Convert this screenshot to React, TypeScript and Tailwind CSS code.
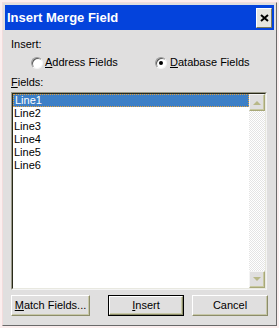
import React from 'react';

const font = "font-['Liberation_Sans',Arial,sans-serif]";

const Radio: React.FC<{ checked?: boolean }> = ({ checked }) => (
  <span className="relative inline-flex h-[12px] w-[12px] items-center justify-center rounded-full border border-t-[#9a9a9a] border-l-[#9a9a9a] border-r-[#f4f4f4] border-b-[#f4f4f4] bg-white shadow-[inset_1px_1px_0_#5a5a5a]">
    {checked && <span className="h-[4px] w-[4px] rounded-full bg-black" />}
  </span>
);

const Button: React.FC<{ children: React.ReactNode; w: string; def?: boolean }> = ({ children, w, def }) => (
  <div className={`${w} h-[21px] ${def ? 'border border-black' : ''}`}>
    <div className="flex h-full w-full items-center justify-center border border-t-white border-l-white border-r-[#8c8c6a] border-b-[#8c8c6a] bg-[#e0dfdf] text-[11px] text-black shadow-[inset_-1px_-1px_0_#c8c8a8]">
      {children}
    </div>
  </div>
);

const ScrollBtn: React.FC<{ up?: boolean }> = ({ up }) => (
  <div className="flex h-[17px] w-[16px] items-center justify-center border border-t-[#f4f4f4] border-l-[#f4f4f4] border-r-[#a8a878] border-b-[#a8a878] bg-[#e0dfdf] shadow-[inset_-1px_-1px_0_#c8c8a0]">
    <svg width="8" height="5" viewBox="0 0 8 5">
      {up ? <path d="M0 5 L4 1 L8 5 Z" fill="#b8b888" /> : <path d="M0 0 L4 4 L8 0 Z" fill="#b8b888" />}
    </svg>
  </div>
);

export default function App() {
  const lines = ['Line1', 'Line2', 'Line3', 'Line4', 'Line5', 'Line6'];
  return (
    <div className={`${font} h-[328px] w-[279px] bg-[#fbeeee] pl-[2px] pt-[2px]`}>
      <div className="flex h-[324px] w-[275px] flex-col border border-t-[#f2dcdc] border-l-[#f2dcdc] border-r-[#6a6a6a] border-b-[#6a6a6a] bg-[#e0dfdf] p-[2px]">
        {/* title bar */}
        <div className="flex h-[25px] items-center justify-between bg-[#0443dc] pl-[2px] pr-[2px]">
          <span className="text-[13px] font-bold text-white">Insert Merge Field</span>
          <div className="flex h-[20px] w-[16px] items-center justify-center border border-t-white border-l-white border-r-[#7a7a5a] border-b-[#7a7a5a] bg-[#e6e5e0]">
            <svg width="9" height="8" viewBox="0 0 9 8">
              <path d="M1 1 L8 7 M8 1 L1 7" stroke="#000" strokeWidth="2" />
            </svg>
          </div>
        </div>

        <div className="flex flex-1 flex-col px-[6px] text-[11px] text-black">
          <div className="mt-[8px] leading-[13px]">Insert:</div>
          <div className="mt-[5px] flex h-[13px] items-center">
            <div className="ml-[20px] flex w-[124px] items-center gap-[2px]">
              <Radio />
              <span><span className="underline">A</span>ddress Fields</span>
            </div>
            <div className="flex items-center gap-[3px]">
              <Radio checked />
              <span><span className="underline">D</span>atabase Fields</span>
            </div>
          </div>
          <div className="mt-[7px] leading-[13px]"><span className="underline">F</span>ields:</div>

          {/* list box */}
          <div className="mt-[3px] flex h-[198px] w-[256px] border border-t-[#9a9a8a] border-l-[#9a9a8a] border-r-[#f4f4f4] border-b-[#f4f4f4]">
            <div className="flex flex-1 border border-t-[#2a2a1a] border-l-[#2a2a1a] border-r-[#e8e8e0] border-b-[#e8e8e0] bg-white">
              <div className="flex-1 leading-[13px]">
                {lines.map((l, i) => (
                  <div
                    key={l}
                    className={`h-[13px] pl-[1px] ${i === 0 ? 'border border-dotted border-[#e0a040] bg-[#3d7fc6] pl-0 text-white leading-[11px]' : ''}`}
                  >
                    {l}
                  </div>
                ))}
              </div>
              <div className="flex w-[16px] flex-col bg-[repeating-conic-gradient(#e4e4e4_0%_25%,#ffffff_0%_50%)] bg-[length:2px_2px]">
                <ScrollBtn up />
                <div className="flex-1" />
                <ScrollBtn />
              </div>
            </div>
          </div>

          {/* buttons */}
          <div className="mt-[5px] flex items-center">
            <Button w="w-[80px]">
              <span><span className="underline">M</span>atch Fields...</span>
            </Button>
            <div className="ml-[18px]">
              <Button w="w-[76px]" def>
                <span><span className="underline">I</span>nsert</span>
              </Button>
            </div>
            <div className="ml-[8px]">
              <Button w="w-[76px]">Cancel</Button>
            </div>
          </div>
        </div>
      </div>
    </div>
  );
}
